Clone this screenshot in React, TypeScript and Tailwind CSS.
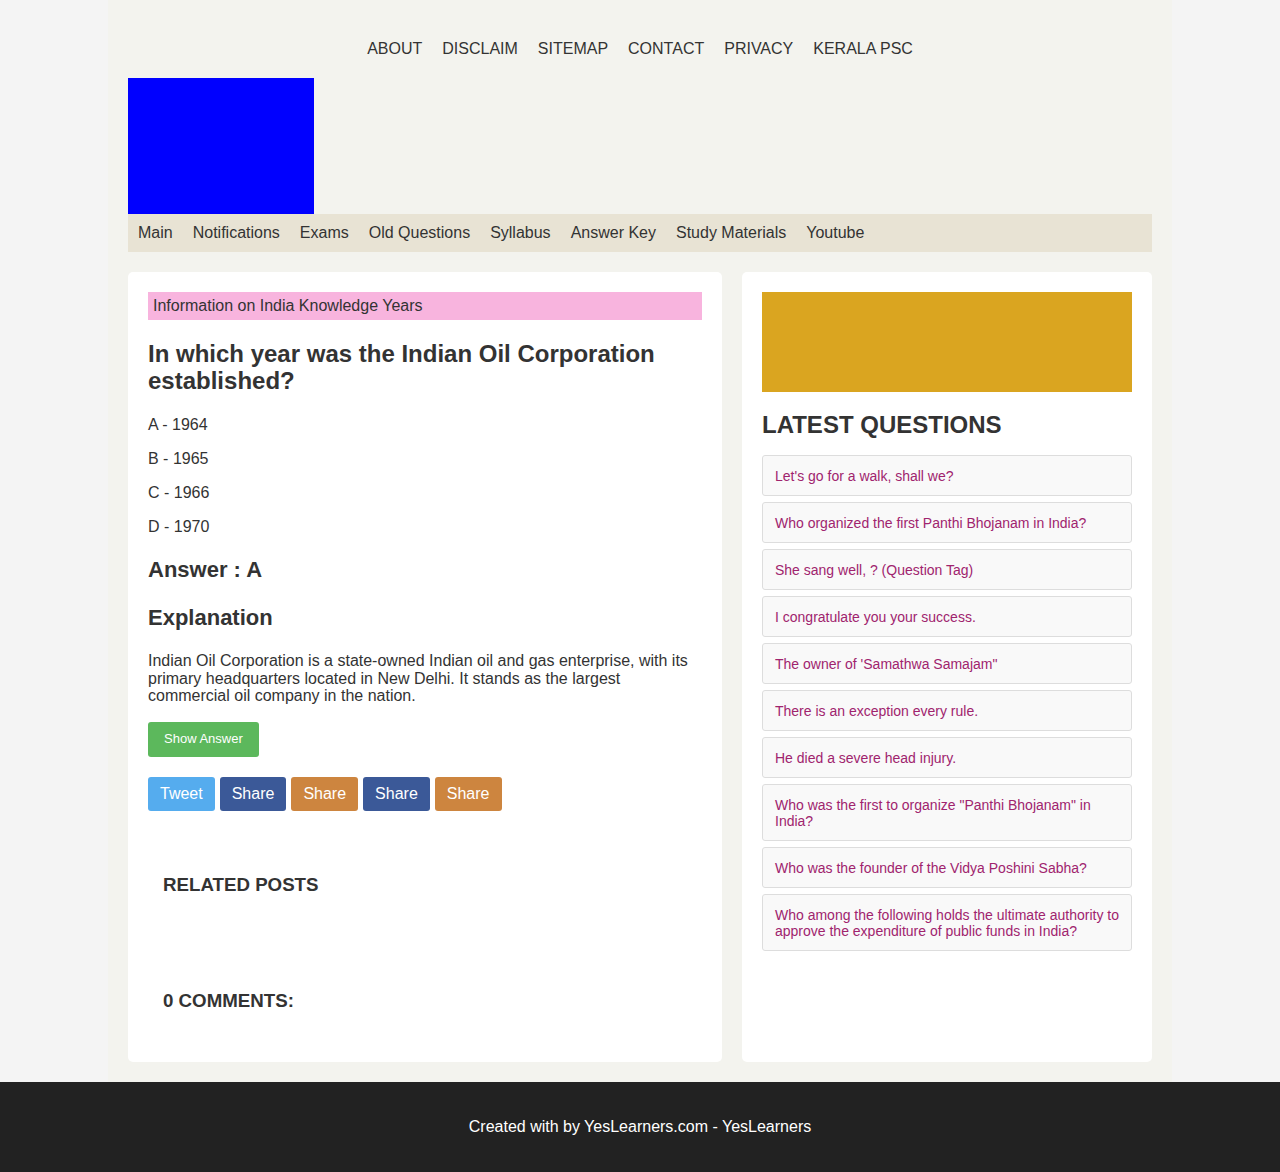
import React from "react";

const topNav = ["ABOUT", "DISCLAIM", "SITEMAP", "CONTACT", "PRIVACY", "KERALA PSC"];
const menu = ["Main", "Notifications", "Exams", "Old Questions", "Syllabus", "Answer Key", "Study Materials", "Youtube"];
const latest = [
  "Let's go for a walk, shall we?",
  "Who organized the first Panthi Bhojanam in India?",
  "She sang well, ? (Question Tag)",
  "I congratulate you your success.",
  "The owner of 'Samathwa Samajam\"",
  "There is an exception every rule.",
  "He died a severe head injury.",
  "Who was the first to organize \"Panthi Bhojanam\" in India?",
  "Who was the founder of the Vidya Poshini Sabha?",
  "Who among the following holds the ultimate authority to approve the expenditure of public funds in India?",
];

export default function App() {
  return (
    <div className="min-h-[1172px] bg-[#f4f4f4] text-[#333] font-['Liberation_Sans',Arial,sans-serif]">
      <div className="mx-auto w-[1064px] bg-[#f3f3ee] px-5 pb-5">
        <nav className="h-[78px] pt-[40px] flex justify-center gap-5 text-[16px] leading-[18px] text-[#333]">
          {topNav.map((n) => (
            <a key={n} className="block">{n}</a>
          ))}
        </nav>
        <div className="w-[186px] h-[136px] bg-[#0000ff]" />
        <div className="h-[38px] bg-[#e8e3d4] flex items-center gap-5 pl-[10px] text-[16px] leading-[18px]">
          {menu.map((m) => (
            <a key={m}>{m}</a>
          ))}
        </div>
        <div className="mt-5 flex gap-5 items-stretch">
          <div className="w-[594px] bg-white rounded-[5px] px-5 pt-5 pb-5">
            <div className="h-[28px] bg-[#f8b4de] pl-[5px] flex items-center text-[16px] leading-[18px]">
              Information on India Knowledge Years
            </div>
            <h2 className="mt-[20px] text-[24px] leading-[27px] font-bold">
              In which year was the Indian Oil Corporation established?
            </h2>
            <p className="mt-[22px] text-[16px] leading-[18px]">A - 1964</p>
            <p className="mt-[16px] text-[16px] leading-[18px]">B - 1965</p>
            <p className="mt-[16px] text-[16px] leading-[18px]">C - 1966</p>
            <p className="mt-[16px] text-[16px] leading-[18px]">D - 1970</p>
            <h3 className="mt-[21px] text-[22px] leading-[25px] font-bold">Answer : A</h3>
            <h3 className="mt-[23px] text-[22px] leading-[25px] font-bold">Explanation</h3>
            <p className="mt-[22px] text-[16px] leading-[17.5px]">
              Indian Oil Corporation is a state-owned Indian oil and gas enterprise, with its primary headquarters located in New Delhi. It stands as the largest commercial oil company in the nation.
            </p>
            <button className="mt-[17px] h-[35px] px-4 bg-[#5cb85c] text-white text-[13px] rounded-[3px] block">
              Show Answer
            </button>
            <div className="mt-5 flex gap-[5px]">
              <span className="h-[34px] px-3 flex items-center bg-[#55acee] text-white text-[16px] rounded-[3px]">Tweet</span>
              <span className="h-[34px] px-3 flex items-center bg-[#3b5998] text-white text-[16px] rounded-[3px]">Share</span>
              <span className="h-[34px] px-3 flex items-center bg-[#cd853f] text-white text-[16px] rounded-[3px]">Share</span>
              <span className="h-[34px] px-3 flex items-center bg-[#3b5998] text-white text-[16px] rounded-[3px]">Share</span>
              <span className="h-[34px] px-3 flex items-center bg-[#cd853f] text-white text-[16px] rounded-[3px]">Share</span>
            </div>
            <h4 className="mt-[63px] ml-[15px] text-[18.72px] leading-[22px] font-bold">RELATED POSTS</h4>
            <h4 className="mt-[94px] ml-[15px] text-[18.72px] leading-[22px] font-bold">0 COMMENTS:</h4>
            <div className="h-[30px]" />
          </div>
          <div className="w-[410px] bg-white rounded-[5px] p-5">
            <div className="h-[100px] bg-[#daa520]" />
            <h2 className="mt-[19px] text-[24px] leading-[28px] font-bold">LATEST QUESTIONS</h2>
            <ul className="mt-[16px] flex flex-col gap-[6px]">
              {latest.map((q) => (
                <li
                  key={q}
                  className="bg-[#f9f9f9] border border-[#dddddd] rounded-[3px] px-3 py-[11.5px] text-[14px] leading-[16px] text-[#a0246e]"
                >
                  {q}
                </li>
              ))}
            </ul>
          </div>
        </div>
      </div>
      <footer className="h-[90px] bg-[#222222] flex items-center justify-center text-white text-[16px]">
        Created with by YesLearners.com - YesLearners
      </footer>
    </div>
  );
}
